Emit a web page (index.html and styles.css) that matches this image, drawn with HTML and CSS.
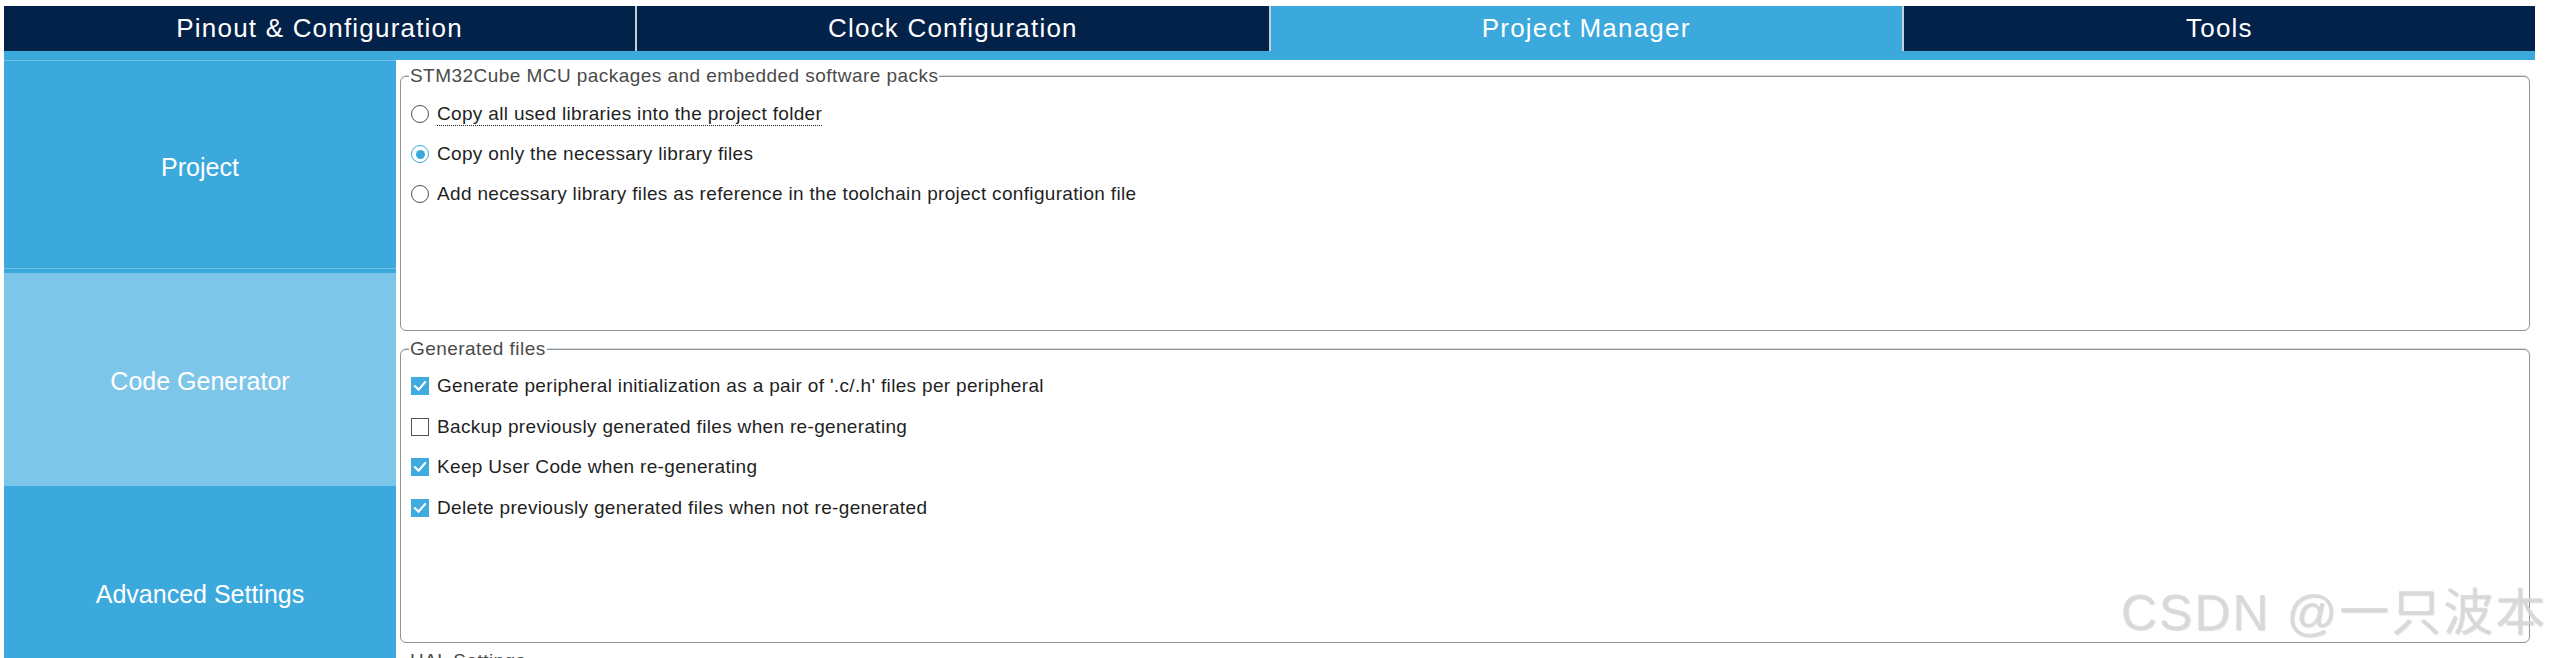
FILE: index.html
```html
<!DOCTYPE html>
<html lang="en">
<head>
<meta charset="utf-8">
<title>Project Manager</title>
<link rel="stylesheet" href="styles.css">
</head>
<body>
<div class="app">
  <nav class="tabs">
    <div class="tab">Pinout &amp; Configuration</div>
    <div class="tab">Clock Configuration</div>
    <div class="tab active">Project Manager</div>
    <div class="tab">Tools</div>
  </nav>
  <div class="strip"></div>
  <div class="main">
    <aside class="sidebar">
      <div class="nav-item nav-project">Project</div>
      <div class="nav-item nav-codegen">Code Generator</div>
      <div class="nav-item nav-advanced">Advanced Settings</div>
    </aside>
    <section class="content">
      <fieldset class="group group-packs">
        <legend>STM32Cube MCU packages and embedded software packs</legend>
        <div class="rows">
          <div class="row"><span class="radio"></span><span class="label focus">Copy all used libraries into the project folder</span></div>
          <div class="row"><span class="radio checked"></span><span class="label">Copy only the necessary library files</span></div>
          <div class="row"><span class="radio"></span><span class="label">Add necessary library files as reference in the toolchain project configuration file</span></div>
        </div>
      </fieldset>
      <fieldset class="group group-files">
        <legend>Generated files</legend>
        <div class="rows">
          <div class="row"><span class="check checked"><svg viewBox="0 0 18 18" width="18" height="18"><path d="M4 9.2 L7.6 12.6 L14 5.2" fill="none" stroke="#fff" stroke-width="2.2" stroke-linecap="square"/></svg></span><span class="label">Generate peripheral initialization as a pair of '.c/.h' files per peripheral</span></div>
          <div class="row"><span class="check"></span><span class="label">Backup previously generated files when re-generating</span></div>
          <div class="row"><span class="check checked"><svg viewBox="0 0 18 18" width="18" height="18"><path d="M4 9.2 L7.6 12.6 L14 5.2" fill="none" stroke="#fff" stroke-width="2.2" stroke-linecap="square"/></svg></span><span class="label">Keep User Code when re-generating</span></div>
          <div class="row"><span class="check checked"><svg viewBox="0 0 18 18" width="18" height="18"><path d="M4 9.2 L7.6 12.6 L14 5.2" fill="none" stroke="#fff" stroke-width="2.2" stroke-linecap="square"/></svg></span><span class="label">Delete previously generated files when not re-generated</span></div>
        </div>
      </fieldset>
      <fieldset class="group group-hal">
        <legend>HAL Settings</legend>
        <div class="rows"></div>
      </fieldset>
    </section>
  </div>
</div>
<div class="watermark">CSDN @一只波本</div>
</body>
</html>
```
FILE: styles.css
```css
html, body {
  margin: 0;
  padding: 0;
  background: #ffffff;
  overflow: hidden;
}
body {
  width: 2549px;
  height: 658px;
  position: relative;
  font-family: "Liberation Sans", Arial, sans-serif;
}
.app {
  width: 2531px;
  margin: 6px 0 0 4px;
  height: 652px;
  display: flex;
  flex-direction: column;
}
.tabs {
  display: flex;
  height: 45px;
  gap: 2px;
  background: #c5ccd6;
}
.tab {
  flex: 1;
  background: #03224a;
  color: #ffffff;
  font-size: 26px;
  letter-spacing: 1.2px;
  display: flex;
  align-items: center;
  justify-content: center;
}
.tab.active {
  background: #3ba9dc;
}
.strip {
  height: 9px;
  background: #3ba9dc;
}
.main {
  flex: 1;
  display: flex;
  min-height: 0;
}
.sidebar {
  width: 392px;
  background: #3ba9dc;
  display: flex;
  flex-direction: column;
  flex-shrink: 0;
}
.nav-item {
  color: #ffffff;
  font-size: 25px;
  display: flex;
  align-items: center;
  justify-content: center;
  flex-shrink: 0;
  box-sizing: border-box;
  padding-top: 3px;
}
.nav-project {
  height: 209px;
  padding-top: 5px;
  border-top: 1px solid #6fc0e8;
  border-bottom: 1px solid #6fc0e8;
  margin-bottom: 4px;
}
.nav-codegen {
  height: 213px;
  background: #7dc5e9;
}
.nav-advanced {
  height: 213px;
  background: #3ba9dc;
}
.content {
  flex: 1;
  padding: 5px 5px 0 4px;
  display: flex;
  flex-direction: column;
  gap: 7px;
  min-width: 0;
}
.group {
  margin: 0;
  padding: 0 10px;
  border: 1px solid #8d949b;
  border-radius: 6px;
  box-shadow: 0 -1px 0 #d6d9dc;
  box-sizing: border-box;
  flex-shrink: 0;
}
.group legend {
  font-size: 19px;
  line-height: 22px;
  letter-spacing: 0.45px;
  color: #4a4a4a;
  padding: 0 1px;
  margin-left: -2px;
  background: #ffffff;
}
.group-packs {
  height: 266px;
}
.group-packs .rows {
  padding-top: 7px;
}
.group-files {
  height: 305px;
}
.group-files .rows {
  padding-top: 6px;
}
.group-files .row {
  height: 40.5px;
}
.group-hal {
  height: 120px;
}
.row {
  height: 40px;
  display: flex;
  align-items: center;
  gap: 8px;
}
.label {
  font-size: 19px;
  line-height: 22px;
  letter-spacing: 0.33px;
  color: #1f1f1f;
  white-space: nowrap;
}
.label.focus {
  border-bottom: 1px dotted #222222;
  margin-top: 1px;
}
.radio {
  width: 18px;
  height: 18px;
  box-sizing: border-box;
  border: 1.5px solid #505050;
  border-radius: 50%;
  background: #ffffff;
  flex-shrink: 0;
  display: flex;
  align-items: center;
  justify-content: center;
}
.radio.checked {
  border-color: #3ba9dc;
}
.radio.checked::after {
  content: "";
  width: 9px;
  height: 9px;
  border-radius: 50%;
  background: #3ba9dc;
}
.check {
  width: 18px;
  height: 18px;
  box-sizing: border-box;
  border: 1.5px solid #555555;
  background: #ffffff;
  flex-shrink: 0;
  display: flex;
}
.check.checked {
  border: none;
  background: #40abde;
}
.watermark {
  position: absolute;
  right: 2px;
  bottom: 14px;
  font-family: "Liberation Sans", "Noto Sans CJK SC", sans-serif;
  font-size: 50px;
  letter-spacing: 2px;
  color: rgba(215, 215, 215, 0.85);
  text-shadow: 1px 1px 1px rgba(160, 160, 160, 0.35);
  pointer-events: none;
  white-space: nowrap;
}
```
